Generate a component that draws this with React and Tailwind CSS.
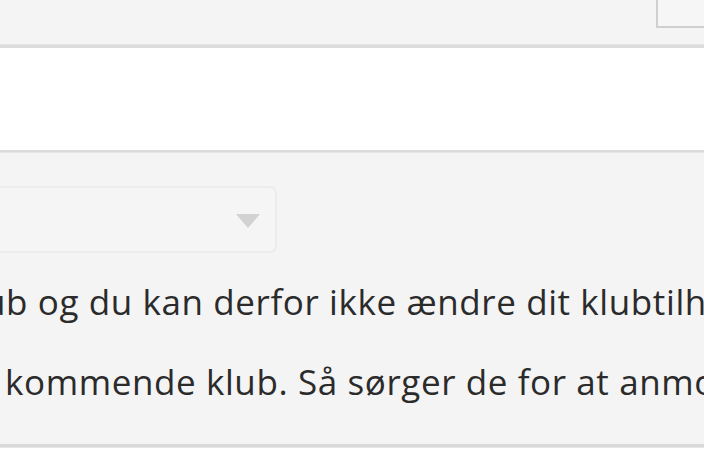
import React from 'react';

export default function App() {
    return (
        <div className="w-[704px] h-[470px] overflow-hidden bg-white font-['Open_Sans',sans-serif] text-[#2b2b2b]">
            {/* Top bar */}
            <div className="h-[44px] bg-[#f4f4f4] flex justify-end">
                <div className="w-[48px] h-[28px] border-l-2 border-b-2 border-[#cfcfcf] bg-[#f6f6f6]" />
            </div>
            <div className="h-[4px] bg-[#dcdcdc] border-t border-[#e6e6e6]" />

            {/* Input area */}
            <div className="h-[102px] bg-white" />
            <div className="h-[3px] bg-[#dadada] border-b border-[#e4e4e4]" />

            {/* Club section */}
            <div className="h-[291px] bg-[#f4f4f4] overflow-hidden">
                <div className="pt-[33px]">
                    <div className="w-[300px] -ml-[23px] h-[67px] rounded-[7px] border-2 border-[#ececec] bg-[#f5f5f5] flex items-center justify-end pr-[15px]">
                        <svg width="24" height="14" viewBox="0 0 24 14" className="mt-[3px]">
                            <path d="M0 0 L24 0 L12 14 Z" fill="#d2d2d2" />
                        </svg>
                    </div>
                </div>
                <div className="mt-[9px] text-[35px] leading-[80px] tracking-[0.6px] whitespace-nowrap">
                    <p className="-ml-[16px]">ub og du kan derfor ikke ændre dit klubtilhørsforhold</p>
                    <p className="ml-[5px]">kommende klub. Så sørger de for at anmode om skifte</p>
                </div>
            </div>
            <div className="h-[4px] bg-[#d9d9d9] border-b border-[#e6e6e6]" />
        </div>
    );
}
